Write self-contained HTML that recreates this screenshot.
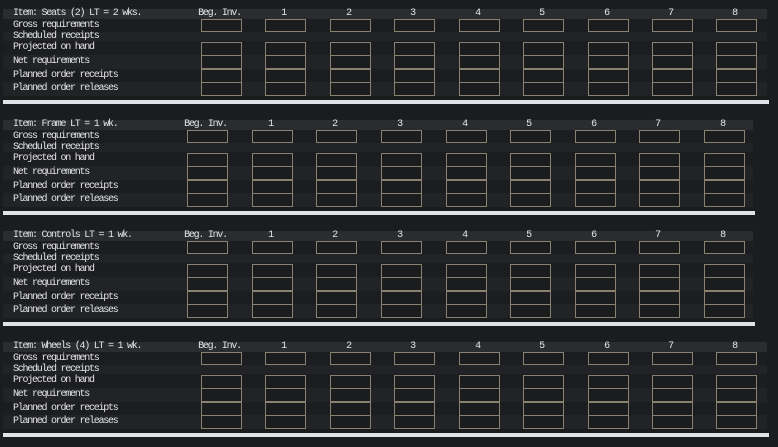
<!DOCTYPE html>
<html><head><meta charset="utf-8"><style>
body{margin:0;width:778px;height:447px;background:#1b1c1e;position:relative;overflow:hidden;font-family:"Liberation Mono","DejaVu Sans Mono",monospace;font-size:10px;letter-spacing:-1.25px;color:#e4e4e4}
.t{position:absolute;left:0;top:0;width:778px;height:111px}
.r{position:absolute;left:3px;height:14px}
.h{background:#2a2d30}
.l{background:#212326}
.d{background:#1c1d20}
.lab{position:absolute;left:13px;line-height:10px;white-space:nowrap}
.n{position:absolute;line-height:10px;text-align:center;white-space:nowrap}
.b{position:absolute;box-sizing:border-box;border:1.5px solid #8a8070;background:#1b1c1e}
.sep{position:absolute;left:3px;height:4px;background:#dfe3e8}
</style></head><body>
<div class="t" id="t0" style="top:0"><div class="lab" style="top:9px">Item: Seats (2) LT = 2 wks.</div></div>
<div class="t" id="t1" style="top:111px"><div class="lab" style="top:9px">Item: Frame LT = 1 wk.</div></div>
<div class="t" id="t2" style="top:222px"><div class="lab" style="top:9px">Item: Controls LT = 1 wk.</div></div>
<div class="t" id="t3" style="top:333px"><div class="lab" style="top:9px">Item: Wheels (4) LT = 1 wk.</div></div>
<div id="labels" style="display:none">
<span>Beg. Inv.</span><span>1</span><span>2</span><span>3</span><span>4</span><span>5</span><span>6</span><span>7</span><span>8</span>
<span>Gross requirements</span><span>Scheduled receipts</span><span>Projected on hand</span><span>Net requirements</span><span>Planned order receipts</span><span>Planned order releases</span>
</div>
<script>
var A=[201,265,330,394,459,523,588,652,716],B=[187,252,316,381,446,510,575,639,704];
var heads=["Beg. Inv.","1","2","3","4","5","6","7","8"];
var rows=[["Gross requirements",19,13,"d"],["Scheduled receipts",32,9,"l"],["Projected on hand",41,14,"d"],["Net requirements",55,14,"l"],["Planned order receipts",69,13,"d"],["Planned order releases",82,14,"l"]];
for(var k=0;k<4;k++){
 var t=document.getElementById("t"+k),xs=(k==1||k==2)?B:A,w=(k==1||k==2)?750:764;
 var h='<div class="r h" style="top:9px;height:10px;width:'+w+'px"></div>';
 rows.forEach(function(r){h+='<div class="r '+r[3]+'" style="top:'+r[1]+'px;height:'+r[2]+'px;width:'+w+'px"></div>';});
 h+=t.innerHTML;
 xs.forEach(function(x,i){
  h+='<div class="n" style="top:9px;left:'+(x-10)+'px;width:57px">'+heads[i]+'</div>';
  h+='<div class="b" style="left:'+x+'px;top:19px;width:41px;height:13px"></div>';
  [42,55,69,82].forEach(function(y){h+='<div class="b" style="left:'+x+'px;top:'+y+'px;width:41px;height:14px"></div>';});
 });
 rows.forEach(function(r){h+='<div class="lab" style="top:'+(r[1]+(r[2]-10)/2)+'px">'+r[0]+'</div>';});
 h+='<div class="sep" style="top:100px;width:'+(w+2)+'px"></div>';
 t.innerHTML=h;
}
</script>
</body></html>
